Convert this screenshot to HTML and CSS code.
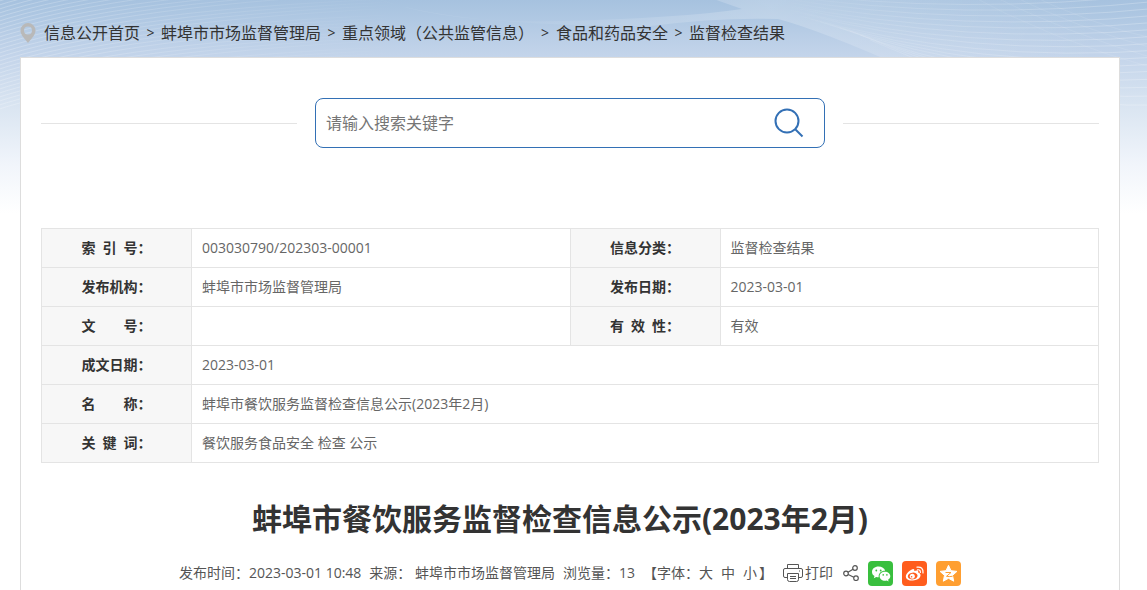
FILE: index.html
```html
<!DOCTYPE html>
<html lang="zh-CN">
<head>
	<meta charset="UTF-8">
	<meta name="viewport" content="width=device-width, initial-scale=1">
	<title>蚌埠市餐饮服务监督检查信息公示(2023年2月)</title>
	<link rel="stylesheet" href="styles.css">
</head>
<body>
	<svg class="page-bg" viewBox="0 0 1147 220" preserveAspectRatio="none" aria-hidden="true">
		<defs>
			<linearGradient id="sky" x1="0" y1="0" x2="0" y2="1">
				<stop offset="0" stop-color="#a6c2df"/>
				<stop offset=".25" stop-color="#c3d4ea"/>
				<stop offset=".5" stop-color="#dbe6f2"/>
				<stop offset=".75" stop-color="#f1f5fb"/>
				<stop offset=".97" stop-color="#fff"/>
			</linearGradient>
			<linearGradient id="glow" gradientUnits="userSpaceOnUse" x1="370" y1="0" x2="1100" y2="0">
				<stop offset="0" stop-color="#fff" stop-opacity=".15"/>
				<stop offset=".2" stop-color="#fff" stop-opacity=".04"/>
				<stop offset=".55" stop-color="#fff" stop-opacity=".22"/>
				<stop offset="1" stop-color="#fff" stop-opacity="0"/>
			</linearGradient>
			<linearGradient id="fade" gradientUnits="userSpaceOnUse" x1="0" y1="0" x2="400" y2="0">
				<stop offset="0" stop-color="#fff" stop-opacity=".24"/>
				<stop offset="1" stop-color="#fff" stop-opacity="0"/>
			</linearGradient>
			<linearGradient id="rise" gradientUnits="userSpaceOnUse" x1="780" y1="0" x2="1147" y2="0">
				<stop offset="0" stop-color="#fff" stop-opacity="0"/>
				<stop offset=".3" stop-color="#fff" stop-opacity=".12"/>
				<stop offset="1" stop-color="#fff" stop-opacity=".24"/>
			</linearGradient>
			<g id="l4">
				<path d="M-10 4Q120-40 420-50M-10 8Q120-36 420-47M-10 12Q120-32 420-44M-10 16Q120-28 420-41"/>
			</g>
		</defs>
		<rect width="1147" height="220" fill="url(#sky)"/>
		<path d="M370-4Q440 24 560 21Q680 18 742 9L705-4H1147V70H910Q820 30 778 19Q720 17 650 26Q440 26 370-4Z" fill="url(#glow)"/>
		<g fill="none" stroke="url(#fade)">
			<use href="#l4"/>
			<use href="#l4" y="16"/>
			<use href="#l4" y="32"/>
			<use href="#l4" y="48"/>
			<use href="#l4" y="64"/>
			<use href="#l4" y="80"/>
			<use href="#l4" y="96"/>
		</g>
		<g fill="none" stroke="url(#rise)">
			<path d="M780-8Q960 16 1160-6M780-5Q960 22 1160 1M780-2Q960 28 1160 8M780 1Q960 34 1160 15"/>
			<path d="M780 4Q960 40 1160 22M790 7Q960 46 1160 29M790 10Q960 52 1160 36M800 13Q970 58 1160 43"/>
			<path d="M800 16Q970 64 1160 50M810 19Q980 70 1160 57M820 22Q990 76 1160 64M830 25Q1000 82 1160 71"/>
			<path d="M840 28Q1000 88 1160 79M850 31Q1010 95 1160 87M860 35Q1020 102 1160 96M870 40Q1030 110 1160 105"/>
			<path d="M960-10Q1050 40 1160 70M980-10Q1070 35 1160 60M1000-10Q1080 30 1160 50M1020-10Q1090 25 1160 40" opacity=".4"/>
		</g>
	</svg>

	<div class="page">
		<nav class="crumbs">
			<svg class="pin" viewBox="0 0 16 20" aria-hidden="true"><path d="M8 0A7.500 7.500 0 0 0 .5 7.500C.5 12 5 16 8 20c3-4 7.500-8 7.500-12.500A7.500 7.500 0 0 0 8 0zm0 3.500a4 4 0 1 1 0 8 4 4 0 0 1 0-8z" fill="#b9b9b9" fill-rule="evenodd"/></svg>
			<a href="#">信息公开首页</a><i>&gt;</i>
			<a href="#">蚌埠市市场监督管理局</a><i>&gt;</i>
			<a href="#">重点领域（公共监管信息）</a><i class="wide">&gt;</i>
			<a href="#">食品和药品安全</a><i>&gt;</i>
			<a href="#">监督检查结果</a>
		</nav>

		<main class="panel">
			<div class="search">
				<form class="search-box">
					<input type="text" placeholder="请输入搜索关键字" aria-label="请输入搜索关键字">
					<button type="submit" aria-label="搜索">
						<svg viewBox="0 0 30 30"><g fill="none" stroke="#3370b5" stroke-width="2"><circle cx="13" cy="13" r="11.500"/><path d="M21 21l7.500 7.500"/></g></svg>
					</button>
				</form>
			</div>

			<table class="info">
				<tr>
					<th><span>索 引 号</span>：</th>
					<td>003030790/202303-00001</td>
					<th><span>信息分类</span>：</th>
					<td>监督检查结果</td>
				</tr>
				<tr>
					<th><span>发布机构</span>：</th>
					<td>蚌埠市市场监督管理局</td>
					<th><span>发布日期</span>：</th>
					<td>2023-03-01</td>
				</tr>
				<tr>
					<th><span>文 号</span>：</th>
					<td></td>
					<th><span>有 效 性</span>：</th>
					<td>有效</td>
				</tr>
				<tr>
					<th><span>成文日期</span>：</th>
					<td colspan="3">2023-03-01</td>
				</tr>
				<tr>
					<th><span>名 称</span>：</th>
					<td colspan="3">蚌埠市餐饮服务监督检查信息公示(2023年2月)</td>
				</tr>
				<tr>
					<th><span>关 键 词</span>：</th>
					<td colspan="3">餐饮服务食品安全 检查 公示</td>
				</tr>
			</table>

			<h1>蚌埠市餐饮服务监督检查信息公示(2023年2月)</h1>

			<div class="meta">
				<span>发布时间：2023-03-01 10:48</span>
				<span>来源： 蚌埠市市场监督管理局</span>
				<span>浏览量：13</span>
				<span class="size">【字体：<a href="#">大</a><a href="#">中</a><a href="#">小</a>】</span>
				<a class="print" href="#">
					<svg viewBox="0 0 20 18" aria-hidden="true"><g fill="none" stroke="#555"><path d="M4.500 4.500v-4h11v4M4.500 13.500H2Q.5 13.500.5 12V6Q.5 4.500 2 4.500H18Q19.500 4.500 19.500 6v6Q19.500 13.500 18 13.500H15.500"/><path d="M4.500 9.500h11v6q0 2-2 2h-7q-2 0-2-2zM7 12.500h6M7 14.500h6M16 7h1"/></g></svg>打印</a>
				<div class="share">
					<svg class="share-icon" viewBox="0 0 16 16" aria-hidden="true"><g fill="none" stroke="#555" stroke-width="1.200"><circle cx="3" cy="8.500" r="2.300"/><circle cx="12" cy="3" r="2.300"/><circle cx="13" cy="13.200" r="2.300"/><path d="M5 7.300l5-3M5.200 9.500l5.600 2.800"/></g></svg>
					<a class="wechat" href="#" aria-label="微信">
						<svg viewBox="0 0 25 25">
							<path d="M10.500 5.500C6.800 5.500 4 7.900 4 10.900c0 1.800 1 3.200 2.500 4.200l-.7 2.100 2.400-1.300c.8.200 1.600.3 2.500.3-.5-3.800 2.700-6.500 6.500-6.400-.7-2.600-3.400-4.300-6.700-4.300z" fill="#fff"/>
							<path d="M17 10.700c-3.100 0-5.400 2-5.400 4.500s2.400 4.500 5.400 4.500c.6 0 1.200-.1 1.800-.3l1.800 1-.5-1.600c1.300-.9 2.200-2.100 2.200-3.600 0-2.500-2.400-4.500-5.300-4.500z" fill="#fff"/>
							<g fill="#39bf3e"><circle cx="8.300" cy="9.500" r=".9"/><circle cx="12.700" cy="9.500" r=".9"/><circle cx="15.200" cy="13.900" r=".8"/><circle cx="18.900" cy="13.900" r=".8"/></g>
						</svg>
					</a>
					<a class="weibo" href="#" aria-label="微博">
						<svg viewBox="0 0 25 25">
							<path d="M10.500 8.200c1.400-.5 2.200.3 1.700 1.900 2.500-1 4.600-.7 4 1.500 4.500 1.300 2.500 7.600-5.200 8C3.500 20 2 15 6 11.200c1.400-1.400 3-2.500 4.500-3z" fill="#fff"/>
							<ellipse cx="10.700" cy="15" rx="4.900" ry="3.400" fill="#ff5d1d" transform="rotate(-8 10.700 15)"/>
							<circle cx="10.300" cy="15.200" r="2.500" fill="#fff"/>
							<circle cx="9.600" cy="15.700" r=".8" fill="#ff5d1d"/>
							<path d="M15.500 8.800q3-.5 2.900 2.700M15 6.200q6.500-.8 6 5.800" fill="none" stroke="#fff" stroke-width="1.200" stroke-linecap="round"/>
						</svg>
					</a>
					<a class="qzone" href="#" aria-label="QQ空间">
						<svg viewBox="0 0 25 25">
							<path d="M12.500 4.300l2.500 5.400 5.900.7-4.400 4 1.200 5.800-5.200-2.900-5.200 2.900 1.200-5.800-4.400-4 5.900-.7z" fill="#fff" stroke="#fff" stroke-linejoin="round"/>
							<path d="M9.500 11.500h5.500l-4.500 3.800q2.500.6 6 0" fill="none" stroke="#ff9f31"/>
						</svg>
					</a>
				</div>
			</div>
		</main>
	</div>
</body>
</html>
```

FILE: styles.css
```css
* {
	box-sizing: border-box;
}
body {
	margin: 0;
	background: #fff;
	color: #333;
	font-family: "Open Sans", "Noto Sans CJK SC", sans-serif;
	font-size: 14px;
}
a {
	color: inherit;
	text-decoration: none;
}
svg {
	display: block;
}
.page-bg {
	position: absolute;
	top: 0;
	left: 0;
	z-index: -1;
	width: 100%;
	height: 220px;
}
.page {
	display: flex;
	flex-direction: column;
	min-height: 100vh;
	padding: 0 27px 0 20px;
}

/* breadcrumb */
.crumbs {
	display: flex;
	align-items: center;
	height: 57px;
	padding-top: 8px;
	font-size: 16px;
	line-height: 24px;
	white-space: nowrap;
}
.crumbs i {
	width: 21px;
	font-size: 14px;
	font-style: normal;
	text-align: center;
}
.crumbs .wide {
	width: 22px;
}
.pin {
	width: 16px;
	height: 20px;
	margin-right: 8px;
}

.panel {
	flex: 1;
	padding: 40px 20px 0;
	border: 1px solid #ddd;
	border-bottom: 0;
	background: #fff;
}

/* search */
.search {
	display: flex;
	align-items: center;
	gap: 18px;
}
.search:before,
.search:after {
	content: "";
	flex: 1;
	height: 1px;
	background: #e4e4e4;
}
.search-box {
	display: flex;
	width: 510px;
	height: 50px;
	border: 1px solid #3370b5;
	border-radius: 8px;
}
.search-box input {
	flex: 1;
	min-width: 0;
	padding: 0 10px;
	border: 0;
	outline: 0;
	background: none;
	font: inherit;
	font-size: 16px;
}
.search-box input::placeholder {
	color: #757575;
}
.search-box button {
	width: 70px;
	padding: 0 20px;
	border: 0;
	background: none;
	cursor: pointer;
}
.search-box button svg {
	width: 30px;
	height: 30px;
}

/* document info */
.info {
	width: 100%;
	margin-top: 80px;
	border-collapse: collapse;
	table-layout: fixed;
	line-height: 22px;
}
.info th,
.info td {
	height: 39px;
	padding: 0 10px;
	border: 1px solid #e4e4e4;
}
.info th {
	width: 150px;
	background: #f7f7f7;
}
.info th span {
	display: inline-block;
	width: 56px;
	text-align-last: justify;
}
.info td {
	color: #666;
}

h1 {
	margin: 32px 0 0;
	padding-right: 20px;
	font-size: 30px;
	line-height: 48px;
	text-align: center;
}

.meta {
	display: flex;
	align-items: center;
	justify-content: center;
	gap: 8px;
	margin-top: 17px;
	color: #555;
	line-height: 26px;
	white-space: nowrap;
}
.size a {
	margin-right: 8px;
}
.size a:last-child {
	margin-right: 2px;
}
.print {
	display: flex;
	align-items: center;
	gap: 2px;
	margin: 0 2px;
}
.print svg {
	width: 20px;
	height: 18px;
}
.share {
	display: flex;
	align-items: center;
	gap: 9px;
}
.share-icon {
	width: 16px;
	height: 16px;
}
.share a {
	width: 25px;
	height: 25px;
	border-radius: 4px;
}
.wechat {
	background: #39bf3e;
}
.weibo {
	background: #ff5d1d;
}
.qzone {
	background: #ff9f31;
}
```
